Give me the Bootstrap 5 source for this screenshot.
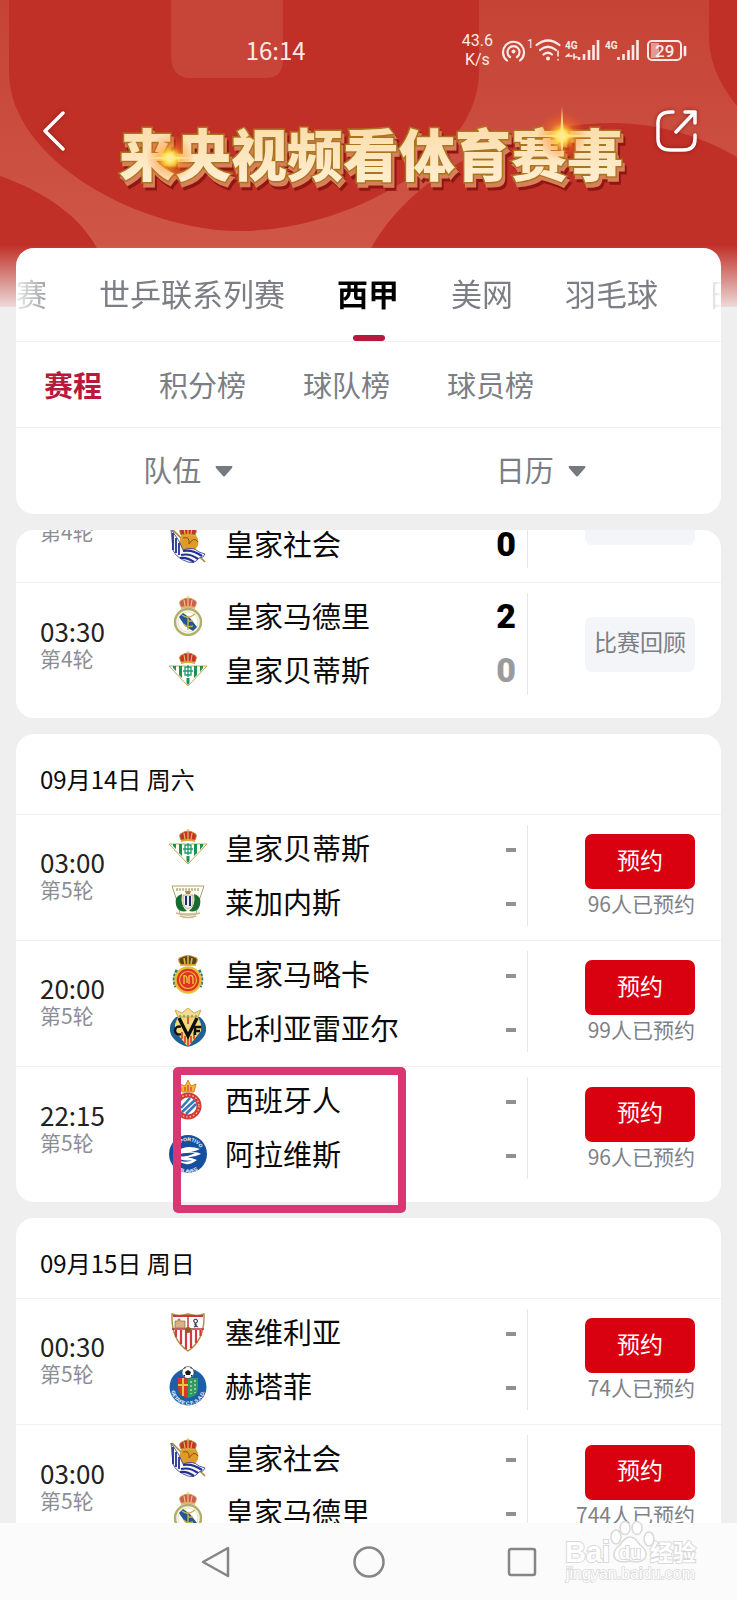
<!DOCTYPE html>
<html lang="zh-CN">
<head>
<meta charset="utf-8">
<meta name="viewport" content="width=device-width, initial-scale=1">
<title>西甲赛程</title>
<link href="https://cdn.jsdelivr.net/npm/bootstrap@5.3.0/dist/css/bootstrap.min.css" rel="stylesheet">
<style>
  body { font-family: "Noto Sans CJK SC", sans-serif; background: #efefef; color: #0a0a0a; line-height: 1.2; }
  a { text-decoration: none; color: inherit; }
  .app-top { position: relative; }
  .hero-art { position: absolute; top: 0; left: 0; width: 100%; height: 307px; }
  .app-top > .over { position: relative; }
  .statusbar { height: 100px; color: #fbeae6; }
  .clock { font-size: 24px; }
  .speed { font-family: Roboto, sans-serif; font-size: 16px; line-height: 19px; }
  .hero-row { height: 148px; padding: 0 39px 30px 43px; }
  .icon-btn { background: none; border: 0; padding: 0; line-height: 0; }
  .hero-row .icon-btn svg { filter: drop-shadow(0 0 2px rgba(90, 0, 0, .5)); }
  .hero-title { margin: 0; }
  .title-text { filter: drop-shadow(2px 4px 0 #d9805a) drop-shadow(2px 3px 0 #8f1712); }
  .panel { background: #fff; border-radius: 18px; }
  .panel-end { padding-bottom: 9px; }
  .line-b { border-bottom: 1px solid #efefef; }
  .tabs { height: 93px; gap: 52px; font-size: 31px; color: #7b7e85; overflow: hidden; white-space: nowrap;
    -webkit-mask-image: linear-gradient(90deg, rgba(0,0,0,.15), #000 44px, #000 calc(100% - 40px), rgba(0,0,0,.05)); }
  .tabs a { flex: none; height: 93px; line-height: 89px; position: relative; }
  .tabs .on { color: #000; font-weight: 700; }
  .tabs .on::after { content: ""; position: absolute; left: 50%; margin-left: -15px; bottom: 0; width: 32px; height: 6px; border-radius: 3px; background: #b8183c; }
  .subtabs { height: 86px; gap: 57px; padding: 0 28px; font-size: 29px; color: #7b7e85; }
  .subtabs .on { color: #b8183c; font-weight: 700; }
  .filters { height: 86px; }
  .filters select { appearance: none; border: 0; background: none; color: #7b7e85; font-size: 29px; line-height: 34px; padding: 0 0 4px; margin-right: 13px; }
  .filters .first-half { padding-right: 8px; }
  .feed { flex: 1 1 0; min-height: 0; overflow: hidden; }
  .cut { height: 53px; overflow: hidden; }
  .day { height: 81px; padding: 10px 24px 0; font-size: 24px; }
  .match { display: grid; grid-template-columns: 128px 1fr 194px; height: 126px; padding: 6px 0 11px; position: relative; }
  .when { padding-left: 24px; align-self: center; }
  .when time { display: block; font-size: 26px; line-height: 28px; color: #222; }
  .when span { display: block; font-size: 21px; line-height: 26px; color: #8c8e93; }
  .team { height: 54px; font-size: 29px; padding: 0 11px 0 24px; }
  .team svg { width: 40px; height: 40px; margin-right: 17px; flex: none; }
  .team .club { padding-bottom: 2px; }
  .score { font-family: Roboto, sans-serif; font-weight: 900; font-size: 34px; margin-left: auto; color: #000; }
  .dim { color: #9a9a9f; }
  .pending { width: 10px; height: 4px; background: #909194; margin-left: auto; margin-top: 4px; overflow: hidden; color: transparent; font-size: 4px; line-height: 4px; }
  .act { border-left: 1px solid #e6e6e8; margin: 4px 0 3px; padding-right: 26px; }
  .act button { width: 110px; height: 55px; border: 0; border-radius: 7px; font-size: 23px; padding: 0 0 4px; }
  .book { background: #d9000f; color: #fff; }
  .review { background: #f4f5f9; color: #7b7e85; }
  .act span { font-size: 21px; line-height: 28px; color: #7e8288; white-space: nowrap; }
  .marker { position: absolute; z-index: 3; left: 157px; top: 0; width: 233px; height: 146px; border: 8px solid #d93674; border-radius: 5px; }
  .sysnav { height: 77px; background: #fbfbfc; gap: 121px; position: relative; z-index: 4; }
  .stamp { position: absolute; right: 32px; bottom: 10px; }
</style>
</head>
<body>
<svg width="0" height="0" class="position-absolute" aria-hidden="true">
  <defs>
    <g id="crown">
      <path d="M13 11 Q10 5 14 4 Q17 2 20 2 Q23 2 26 4 Q30 5 27 11Z" fill="#c8302a" stroke="#b58a32" stroke-width="1"/>
      <path d="M13 11 Q20 9 27 11 V13 Q20 11 13 13Z" fill="#d9a93c"/>
      <path d="M20 0V10M16 4L17 10M24 4L23 10" stroke="#e2bd5c" stroke-width="1.2"/>
    </g>
    <symbol id="sociedad" viewBox="0 0 40 40">
      <path d="M4 5 L37 38" stroke="#a98735" stroke-width="1.6"/>
      <circle cx="21" cy="18" r="9.500" fill="#e09a2a"/>
      <path d="M15 14Q22 12 21 20M21 20Q26 12 30 18" stroke="#8a5512" fill="none" stroke-width="1"/>
      <use href="#crown"/>
      <path d="M3 5 L11 17 L15 26 Q25 22 31 28 L37 30 Q36 34 31 34 Q27 40 20 38 Q8 34 5 26Z" fill="#f6f7fb" stroke="#27338e" stroke-width=".8"/>
      <path d="M5 9V26M8 14V29M11 19V31" stroke="#24318f" stroke-width="1.800" fill="none"/>
      <path d="M15 27Q24 25 34 32M13 31Q22 29 30 35M12 34Q19 33 26 38" stroke="#24318f" stroke-width="2.200" fill="none"/>
    </symbol>
    <symbol id="madrid" viewBox="0 0 40 40">
      <use href="#crown" opacity=".8"/>
      <circle cx="20" cy="26" r="13" fill="#f7f6ea" stroke="#b2ae6c" stroke-width="2.4"/>
      <circle cx="20" cy="26" r="10" fill="#fff" stroke="#d8d4a0" stroke-width=".6"/>
      <path d="M11 21 L15 17 L22 22 L29 31 L25 35 L17 30Z" fill="#1f5794"/>
      <path d="M14 19Q20 24 27 18 M20 22V34 M16 28Q18 32 25 30 M20 25H25" stroke="#cdb04a" stroke-width="1.4" fill="none"/>
    </symbol>
    <symbol id="betis" viewBox="0 0 40 40">
      <path d="M1 16 H39 L20 36Z" fill="#fff" stroke="#c5a64a" stroke-width="1"/>
      <path d="M5 16h3v5l-3-3zM11 16h3v12l-3-3zM26 16h3v9l-3 3zM32 16h3v2l-3 4zM18.500 28h3v5l-1.500 2-1.500-2z" fill="#1c9150"/>
      <circle cx="20" cy="21" r="6" fill="#fff"/>
      <path d="M20 15V27M15 21H25M17 17V25H23V17Z" stroke="#1c9a6b" stroke-width="1.3" fill="none"/>
      <use href="#crown" y="1"/>
    </symbol>
    <symbol id="leganes" viewBox="0 0 40 40">
      <path d="M4 4 H36 L30 22 L28 32 H12 L10 22Z" fill="#fffef5" stroke="#aaa26a" stroke-width="1"/>
      <path d="M8 7.500H32" stroke="#bdb791" stroke-width="2.500" stroke-dasharray="2 1"/>
      <path d="M14 12Q6 14 8 23Q10 31 19 29Q12 24 14 12ZM26 12Q34 14 32 23Q30 31 21 29Q28 24 26 12Z" fill="#176b31"/>
      <path d="M15 13H25V20Q25 25 20 27Q15 25 15 20Z" fill="#e9eef5" stroke="#b9a052" stroke-width=".8"/>
      <path d="M18 14V23M22 14V24" stroke="#1f2f63" stroke-width="2"/>
      <path d="M17 9h6l-1 3h-4z" fill="#b88730"/>
      <path d="M8 31Q20 35 32 31M12 34Q20 37 28 34" stroke="#cbb98c" stroke-width="1.600" fill="none"/>
    </symbol>
    <symbol id="mallorca" viewBox="0 0 40 40">
      <path d="M9 16Q4 25 8 33M31 16Q36 25 32 33" stroke="#2e7d5b" stroke-width="3" stroke-dasharray="3 1" fill="none"/>
      <circle cx="20" cy="26" r="12.500" fill="#de3421" stroke="#e8bd36" stroke-width="2.400"/>
      <circle cx="20" cy="26" r="8.500" fill="none" stroke="#f1b93a" stroke-width="1.200"/>
      <path d="M16 30V22Q18 21 19 24V29M21 30V22Q24 20 25 24V30" stroke="#f6c33d" stroke-width="1.400" fill="none"/>
      <path d="M13 11 Q8 4 14 3 Q20 0 26 3 Q32 4 27 11Z" fill="#5a4320" stroke="#c79a30" stroke-width="1.200"/>
      <path d="M12 11H28M16 4L17 10M20 1V10M24 4L23 10" stroke="#e0b33c" stroke-width="1.600"/>
    </symbol>
    <symbol id="villarreal" viewBox="0 0 40 40">
      <path d="M8 9 Q1 15 2 23 Q4 34 20 39 Q36 34 38 23 Q39 15 32 9Z" fill="#1d6296"/>
      <path d="M10 9H30L33 16V23L20 39L7 23V16Z" fill="#f4d77a"/>
      <path d="M14 24V31M17 28V35M20 28V38M23 28V35M26 24V31M20 9V16" stroke="#d8442d" stroke-width="1.700"/>
      <path d="M11 10L20 28L29 10" fill="none" stroke="#10100f" stroke-width="3.400"/>
      <path d="M13 19A4 4 0 1 0 13 26M27 27V19H33M27 23H32" stroke="#10100f" stroke-width="2.400" fill="none"/>
      <path d="M10 9L7 2L14 5L20 0L26 5L33 2L30 9Z" fill="#f3dc92" stroke="#c49736" stroke-width=".8"/>
      <path d="M11 8H29" stroke="#69a354" stroke-width="1.500" stroke-dasharray="2 2"/>
    </symbol>
    <symbol id="espanyol" viewBox="0 0 40 40">
      <circle cx="20" cy="26" r="13.500" fill="#d63a36"/>
      <circle cx="20" cy="26" r="11" fill="none" stroke="#f5c9b5" stroke-width="1.200" stroke-dasharray="1.500 2"/>
      <circle cx="20" cy="26" r="8.500" fill="#fff"/>
      <path d="M13 28L22 18M14 32L27 20M18 34L28 24" stroke="#3677bd" stroke-width="2.600"/>
      <path d="M14 12L12 4L17 6L20 0L23 6L28 4L26 12Z" fill="#f0bc34" stroke="#cf6b26" stroke-width=".8"/>
      <path d="M17 7V11M20 5V11M23 7V11" stroke="#d5402b" stroke-width="1.200"/>
    </symbol>
    <symbol id="alaves" viewBox="0 0 40 40">
      <circle cx="20" cy="20" r="19" fill="#1550a0"/>
      <path id="ring-top" d="M6 21A14 14 0 0 1 34 21" fill="none"/>
      <path id="ring-bot" d="M3 22A17 17 0 0 0 37 22" fill="none"/>
      <text font-size="5" font-weight="700" fill="#fff" font-family="Liberation Sans"><textPath href="#ring-top" startOffset="7">DEPORTIVO</textPath></text>
      <text font-size="5" font-weight="700" fill="#fff" font-family="Liberation Sans"><textPath href="#ring-bot" startOffset="17">ALAVES</textPath></text>
      <path d="M8 18Q18 10 32 15Q28 17 23 18Q31 18 33 20Q25 24 18 23Q25 24 29 26Q19 34 11 27Q21 29 24 26Q14 28 8 22Q18 24 27 19Q17 18 8 21Z" fill="#fff"/>
    </symbol>
    <symbol id="sevilla" viewBox="0 0 40 40">
      <path d="M4 2Q10 5 20 2Q30 5 36 2Q37 28 20 39Q3 28 4 2Z" fill="#fff" stroke="#b08a43" stroke-width="1.400"/>
      <path d="M8 18V25M13 18V32M18 18V37M23 18V36M28 18V31M32.500 18V24" stroke="#d5383d" stroke-width="2.200"/>
      <path d="M4 17H36M20 3V17" stroke="#b3343a" stroke-width="1.400"/>
      <path d="M5 3H35V5H5Z" fill="#cf3540"/>
      <path d="M7 16V9h3v-2h2v2h5v7z" fill="#d9b083" stroke="#936634" stroke-width=".7"/>
      <path d="M28 7Q24 8 27 11T26 15M28 7Q31 9 28 11T30 15" stroke="#41445a" stroke-width="1.200" fill="none"/>
      <circle cx="20" cy="18" r="3" fill="#9b5a2e"/>
    </symbol>
    <symbol id="getafe" viewBox="0 0 40 40">
      <circle cx="20" cy="21" r="18.500" fill="#1c5fa8"/>
      <path id="ring-get" d="M3 22A17 17 0 0 0 37 22" fill="none"/>
      <path d="M10 12H20V32Q10 30 10 22Z" fill="#d8372b"/>
      <path d="M20 12H30V22Q30 30 20 32Z" fill="#2f9b62"/>
      <path d="M15 12V30M10 19H20" stroke="#eac24a" stroke-width="2"/>
      <path d="M23 15V28M27 14V27" stroke="#c9dfc0" stroke-width="1.300" stroke-dasharray="2 2"/>
      <text font-size="5" font-weight="700" fill="#fff" font-family="Liberation Sans"><textPath href="#ring-get" startOffset="3">GETAFE C.F. S.A.D.</textPath></text>
      <circle cx="20" cy="6.500" r="6" fill="#fff" stroke="#333" stroke-width=".6"/>
      <path d="M20 4l3 2-1 3h-4l-1-3zM15 3l2-2 1 1zM25 3l-2-2-1 1zM15 9l2 2 0-2zM25 9l-2 2 0-2z" fill="#1a1a1a"/>
    </symbol>
  </defs>
</svg>

<div class="vh-100 d-flex flex-column overflow-hidden">
  <header class="app-top">
    <svg class="hero-art" viewBox="0 0 737 307" preserveAspectRatio="none" aria-hidden="true">
      <defs>
        <linearGradient id="band" x1="0" y1="0" x2="0" y2="1"><stop offset="0" stop-color="#c54335"/><stop offset=".8" stop-color="#cf5647"/></linearGradient>
        <linearGradient id="fade" x1="0" y1="0" x2="0" y2="1"><stop offset="0" stop-color="#efefef" stop-opacity="0"/><stop offset="1" stop-color="#f3eceb" stop-opacity=".9"/></linearGradient>
      </defs>
      <rect width="737" height="307" fill="url(#band)"/>
      <path d="M9 0V72C9 160 140 231 240 231C345 231 479 160 479 72V0Z" fill="#c03027"/>
      <path d="M171 0H283V60Q283 78 265 78H190Q171 78 171 55Z" fill="#c64538"/>
      <path d="M0 176C45 192 80 216 98 250V307H0Z" fill="#c03027"/>
      <path d="M709 0V40C710 65 722 88 737 106V0Z" fill="#c03027"/>
      <path d="M370 250C408 180 500 123 615 123Q680 124 737 157V307H370Z" fill="#c03027"/>
      <rect y="245" width="737" height="62" fill="url(#fade)"/>
    </svg>
    <div class="over">
      <div class="statusbar row g-0 align-items-center">
        <div class="col-4"></div>
        <div class="col-2 clock">16:14</div>
        <div class="col-6 d-flex justify-content-end align-items-center pe-5">
          <div class="speed text-center me-2">43.6<br>K/s</div>
          <svg width="188" height="32" viewBox="502 34 188 32" fill="none" stroke="#fbeae6" stroke-width="2" stroke-linecap="round" aria-label="信号与电量">
            <circle cx="514.500" cy="51.500" r="2" fill="#fbeae6" stroke="none"/>
            <path d="M511 57A6 6 0 1 1 518 57M508 60.500A10.500 10.500 0 1 1 521 60.500" stroke-width="2.200"/>
            <path d="M537.500 45Q549 36 560.500 45M541 50Q549 43.500 557 50M544.500 54.500Q549 51 553 54.500" stroke-width="2.200"/>
            <circle cx="549" cy="58.500" r="2" fill="#fbeae6" stroke="none"/>
            <path d="M559 51V56M559 59.500V60M568 56H573M575 57H578M570 54L567 56.500M575 59V54" stroke-width="1.600"/>
            <path d="M580 57V60M585 54V60M590 50V60M594.500 45V60M599 40V60M619.500 57V60M624.500 54V60M629.500 50V60M634 45V60M638.500 40V60" stroke-width="2.600" stroke-linecap="butt"/>
            <rect x="649" y="41" width="33" height="19" rx="4"/>
            <path d="M686 47V55" stroke-width="2.600"/>
            <rect x="652" y="43" width="8" height="15" fill="#e39a90" stroke="none"/>
            <g fill="#fbeae6" stroke="none" font-family="Roboto, sans-serif">
              <text x="528" y="48" font-size="12">1</text>
              <text x="566" y="49" font-size="10" font-weight="700">4G</text>
              <text x="606" y="49" font-size="10" font-weight="700">4G</text>
              <text x="656" y="57" font-size="17" font-weight="500">29</text>
            </g>
          </svg>
        </div>
      </div>
      <div class="hero-row d-flex align-items-start justify-content-between">
        <button class="icon-btn mt-2" aria-label="返回"><svg width="24" height="46" viewBox="0 0 24 46" fill="none" stroke="#fff" stroke-width="3.500" stroke-linecap="round" stroke-linejoin="round"><path d="M20 5L2 23L20 41"/></svg></button>
        <h1 class="hero-title lh-1">
          <svg width="540" height="104" viewBox="93 92 540 104" class="d-block">
            <defs>
              <linearGradient id="gold" x1="0" y1="0" x2="0" y2="1"><stop offset="0" stop-color="#f9d8a0"/><stop offset="1" stop-color="#fff1d6"/></linearGradient>
              <radialGradient id="glow"><stop offset="0" stop-color="#fffde6"/><stop offset=".25" stop-color="#ffe045" stop-opacity=".95"/><stop offset=".55" stop-color="#ff8a1e" stop-opacity=".4"/><stop offset="1" stop-color="#ff5a10" stop-opacity="0"/></radialGradient>
            </defs>
            <text class="title-text" x="372" y="168" font-family="Noto Sans CJK SC" font-weight="900" font-size="56" text-anchor="middle" fill="url(#gold)" stroke="#ab7420" stroke-width="3" paint-order="stroke">来央视频看体育赛事</text>
            <circle cx="171" cy="150" r="24" fill="url(#glow)"/>
            <circle cx="563" cy="128" r="25" fill="url(#glow)"/>
            <path d="M563 98L565 128L563 150L561 128ZM538 128L563 126L592 128L563 130ZM150 150L171 148L195 150L171 152Z" fill="#ffe88a" opacity=".85"/>
          </svg>
        </h1>
        <button class="icon-btn mt-2" aria-label="分享"><svg width="42" height="46" viewBox="0 0 42 46" fill="none" stroke="#fff" stroke-width="3.500" stroke-linecap="round" stroke-linejoin="round"><path d="M17 4H15Q2 4 2 15V31Q2 42 15 42H27Q39 42 39 31V27M29 4H39V15M39 4L20 24"/></svg></button>
      </div>
      <div class="panel mx-3">
        <div class="line-b">
          <nav class="tabs d-flex" aria-label="赛事">
            <a href="#">赛</a><a href="#">世乒联系列赛</a><a href="#" class="on" aria-current="page">西甲</a><a href="#">美网</a><a href="#">羽毛球</a><a href="#">田径</a>
          </nav>
        </div>
        <nav class="subtabs line-b d-flex align-items-center" aria-label="榜单">
          <a href="#" class="on">赛程</a><a href="#">积分榜</a><a href="#">球队榜</a><a href="#">球员榜</a>
        </nav>
        <div class="filters row g-0 align-items-center">
          <div class="col-6 first-half d-flex justify-content-center align-items-center">
            <select aria-label="队伍"><option>队伍</option></select>
            <svg width="18" height="11" viewBox="0 0 18 11" aria-hidden="true"><path d="M1 0H17Q18 0 17 2L10 10Q9 11 8 10L1 2Q0 0 1 0Z" fill="#757982"/></svg>
          </div>
          <div class="col-6 first-half d-flex justify-content-center align-items-center">
            <select aria-label="日历"><option>日历</option></select>
            <svg width="18" height="11" viewBox="0 0 18 11" aria-hidden="true"><path d="M1 0H17Q18 0 17 2L10 10Q9 11 8 10L1 2Q0 0 1 0Z" fill="#757982"/></svg>
          </div>
        </div>
      </div>
    </div>
  </header>

  <main class="feed d-flex flex-column gap-3 pt-3 px-3">
    <section class="panel panel-end flex-shrink-0 overflow-hidden">
      <div class="cut d-flex align-items-end line-b">
        <article class="match flex-fill flex-shrink-0">
          <div class="when"><time>&nbsp;</time><span>第4轮</span></div>
          <div class="d-flex flex-column justify-content-end">
            <div class="team d-flex align-items-center"><svg><use href="#sociedad"/></svg><span class="club">皇家社会</span><b class="score">0</b></div>
          </div>
          <div class="act d-flex flex-column justify-content-center align-items-end"><button class="review" aria-label="比赛回顾"></button></div>
        </article>
      </div>
      <article class="match">
        <div class="when"><time>03:30</time><span>第4轮</span></div>
        <div>
          <div class="team d-flex align-items-center"><svg><use href="#madrid"/></svg><span class="club">皇家马德里</span><b class="score">2</b></div>
          <div class="team d-flex align-items-center"><svg><use href="#betis"/></svg><span class="club">皇家贝蒂斯</span><b class="score dim">0</b></div>
        </div>
        <div class="act d-flex flex-column justify-content-center align-items-end"><button class="review">比赛回顾</button></div>
      </article>
    </section>

    <section class="panel panel-end flex-shrink-0">
      <h2 class="day line-b m-0 fw-normal d-flex align-items-center">09月14日 周六</h2>
      <article class="match line-b">
        <div class="when"><time>03:00</time><span>第5轮</span></div>
        <div>
          <div class="team d-flex align-items-center"><svg><use href="#betis"/></svg><span class="club">皇家贝蒂斯</span><span class="pending">-</span></div>
          <div class="team d-flex align-items-center"><svg><use href="#leganes"/></svg><span class="club">莱加内斯</span><span class="pending">-</span></div>
        </div>
        <div class="act d-flex flex-column justify-content-center align-items-end"><button class="book">预约</button><span>96人已预约</span></div>
      </article>
      <article class="match line-b">
        <div class="when"><time>20:00</time><span>第5轮</span></div>
        <div>
          <div class="team d-flex align-items-center"><svg><use href="#mallorca"/></svg><span class="club">皇家马略卡</span><span class="pending">-</span></div>
          <div class="team d-flex align-items-center"><svg><use href="#villarreal"/></svg><span class="club">比利亚雷亚尔</span><span class="pending">-</span></div>
        </div>
        <div class="act d-flex flex-column justify-content-center align-items-end"><button class="book">预约</button><span>99人已预约</span></div>
      </article>
      <article class="match">
        <div class="when"><time>22:15</time><span>第5轮</span></div>
        <div>
          <div class="team d-flex align-items-center"><svg><use href="#espanyol"/></svg><span class="club">西班牙人</span><span class="pending">-</span></div>
          <div class="team d-flex align-items-center"><svg><use href="#alaves"/></svg><span class="club">阿拉维斯</span><span class="pending">-</span></div>
        </div>
        <div class="act d-flex flex-column justify-content-center align-items-end"><button class="book">预约</button><span>96人已预约</span></div>
        <div class="marker"></div>
      </article>
    </section>

    <section class="panel flex-shrink-0">
      <h2 class="day line-b m-0 fw-normal d-flex align-items-center">09月15日 周日</h2>
      <article class="match line-b">
        <div class="when"><time>00:30</time><span>第5轮</span></div>
        <div>
          <div class="team d-flex align-items-center"><svg><use href="#sevilla"/></svg><span class="club">塞维利亚</span><span class="pending">-</span></div>
          <div class="team d-flex align-items-center"><svg><use href="#getafe"/></svg><span class="club">赫塔菲</span><span class="pending">-</span></div>
        </div>
        <div class="act d-flex flex-column justify-content-center align-items-end"><button class="book">预约</button><span>74人已预约</span></div>
      </article>
      <article class="match">
        <div class="when"><time>03:00</time><span>第5轮</span></div>
        <div>
          <div class="team d-flex align-items-center"><svg><use href="#sociedad"/></svg><span class="club">皇家社会</span><span class="pending">-</span></div>
          <div class="team d-flex align-items-center"><svg><use href="#madrid"/></svg><span class="club">皇家马德里</span><span class="pending">-</span></div>
        </div>
        <div class="act d-flex flex-column justify-content-center align-items-end"><button class="book">预约</button><span>744人已预约</span></div>
      </article>
    </section>
  </main>

  <footer class="sysnav d-flex justify-content-center align-items-center flex-shrink-0">
    <button class="icon-btn" aria-label="返回"><svg width="32" height="32" viewBox="0 0 32 32" fill="none" stroke="#858585" stroke-width="2.500" stroke-linejoin="round"><path d="M28 2V30L3 16Z"/></svg></button>
    <button class="icon-btn" aria-label="主页"><svg width="32" height="32" viewBox="0 0 32 32" fill="none" stroke="#858585" stroke-width="2.500"><circle cx="16" cy="16" r="14.500"/></svg></button>
    <button class="icon-btn" aria-label="最近任务"><svg width="32" height="32" viewBox="0 0 32 32" fill="none" stroke="#858585" stroke-width="2.500"><rect x="3" y="3" width="26" height="26" rx="2"/></svg></button>
    <svg class="stamp" width="144" height="70" viewBox="560 1520 144 70" fill="#fff" stroke="#d9d9d9" stroke-width="1.500" aria-hidden="true">
      <ellipse cx="615" cy="1537" rx="5" ry="7"/><ellipse cx="624" cy="1528" rx="5" ry="6.500"/><ellipse cx="636" cy="1528" rx="5" ry="6.500"/><ellipse cx="648" cy="1539" rx="5" ry="7"/>
      <path d="M629 1537Q634 1537 639 1545Q646 1550 645 1556Q642 1564 629 1561Q615 1564 613 1556Q612 1550 619 1545Q624 1537 629 1537Z"/>
      <g paint-order="stroke" stroke-width="2">
        <text x="564" y="1562" font-family="Liberation Sans" font-weight="700" font-size="29">Bai</text>
        <text x="618" y="1559" font-family="Liberation Sans" font-weight="700" font-size="18">du</text>
        <text x="649" y="1561" font-family="Noto Sans CJK SC" font-weight="700" font-size="23">经验</text>
        <text x="565" y="1579" font-family="Liberation Sans" font-size="16" stroke-width="1.500">jingyan.baidu.com</text>
      </g>
    </svg>
  </footer>
</div>
<script src="https://cdn.jsdelivr.net/npm/bootstrap@5.3.0/dist/js/bootstrap.bundle.min.js"></script>
</body>
</html>
